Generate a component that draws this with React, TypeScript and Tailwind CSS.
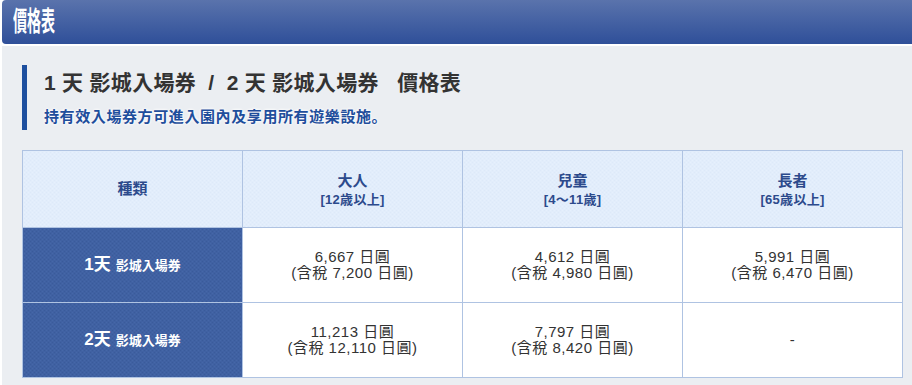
import React from "react";

type Row = {
    day: string;
    prices: ({ price: string; tax: string } | null)[];
};

const rows: Row[] = [
    {
        day: "1天",
        prices: [
            { price: "6,667", tax: "7,200" },
            { price: "4,612", tax: "4,980" },
            { price: "5,991", tax: "6,470" },
        ],
    },
    {
        day: "2天",
        prices: [
            { price: "11,213", tax: "12,110" },
            { price: "7,797", tax: "8,420" },
            null,
        ],
    },
];

const heads = [
    { label: "大人", sub: "[12歳以上]" },
    { label: "兒童", sub: "[4〜11歳]" },
    { label: "長者", sub: "[65歳以上]" },
];

const font = "font-['Liberation_Sans','Noto_Sans_CJK_JP',sans-serif]";
const lightCell =
    "bg-[#e2edfc] bg-[image:repeating-conic-gradient(#dde9f9_0%_25%,#e6f0fd_0%_50%)] bg-[length:4px_4px]";
const darkCell =
    "bg-[#3f61a2] bg-[image:repeating-conic-gradient(#3a5b9b_0%_25%,#4567a8_0%_50%)] bg-[length:4px_4px]";

export default function App() {
    return (
        <div className={`w-[912px] h-[385px] bg-white pl-[2px] ${font}`}>
            <div className="h-[44px] rounded-l-[4px] bg-gradient-to-b from-[#5a73ac] to-[#2f4f99] flex items-center pl-[11px] overflow-hidden">
                <span className="text-white font-bold text-[27px] leading-none scale-x-[0.52] origin-left">
                    價格表
                </span>
            </div>
            <div className="mt-[2px] h-[339px] bg-[#ebeef2] pt-[19px] px-[20px]">
                <div className="border-l-[5px] border-[#1d4f9f] pl-[17px] pt-[2px] pb-[2px]">
                    <h2 className="text-[21px] leading-[32px] font-bold text-[#333] whitespace-pre tracking-[0.3px]">
                        {"1 天 影城入場券  /  2 天 影城入場券   價格表"}
                    </h2>
                    <p className="mt-[7px] text-[15px] leading-[22px] font-bold text-[#1f4e9c] tracking-[0.6px] [text-shadow:0_0_3px_#fff,0_0_3px_#fff]">
                        持有效入場券方可進入園內及享用所有遊樂設施。
                    </p>
                </div>
                <table className="mt-[20px] w-[880px] border-collapse table-fixed">
                    <thead>
                        <tr className="h-[77px]">
                            <th
                                className={`w-[220px] border border-[#afc3e2] ${lightCell} text-[15px] font-bold text-[#2c4a8c]`}
                            >
                                種類
                            </th>
                            {heads.map((h) => (
                                <th
                                    key={h.label}
                                    className={`w-[220px] border border-[#afc3e2] ${lightCell} text-[#2c4a8c] font-bold`}
                                >
                                    <div className="text-[15px] leading-[20px]">
                                        {h.label}
                                    </div>
                                    <div className="text-[13px] leading-[17px] tracking-[0.3px]">
                                        {h.sub}
                                    </div>
                                </th>
                            ))}
                        </tr>
                    </thead>
                    <tbody>
                        {rows.map((r) => (
                            <tr key={r.day} className="h-[75px]">
                                <td
                                    className={`border border-[#afc3e2] ${darkCell} text-center text-white font-bold`}
                                >
                                    <span className="text-[17px]">{r.day}</span>
                                    <span className="text-[13px] ml-[5px]">
                                        影城入場券
                                    </span>
                                </td>
                                {r.prices.map((p, i) => (
                                    <td
                                        key={i}
                                        className="border border-[#afc3e2] bg-white text-center text-[15px] leading-[16px] text-[#333] tracking-[0.5px]"
                                    >
                                        {p ? (
                                            <>
                                                <div>{p.price} 日圓</div>
                                                <div>(含稅 {p.tax} 日圓)</div>
                                            </>
                                        ) : (
                                            <div>-</div>
                                        )}
                                    </td>
                                ))}
                            </tr>
                        ))}
                    </tbody>
                </table>
            </div>
        </div>
    );
}
